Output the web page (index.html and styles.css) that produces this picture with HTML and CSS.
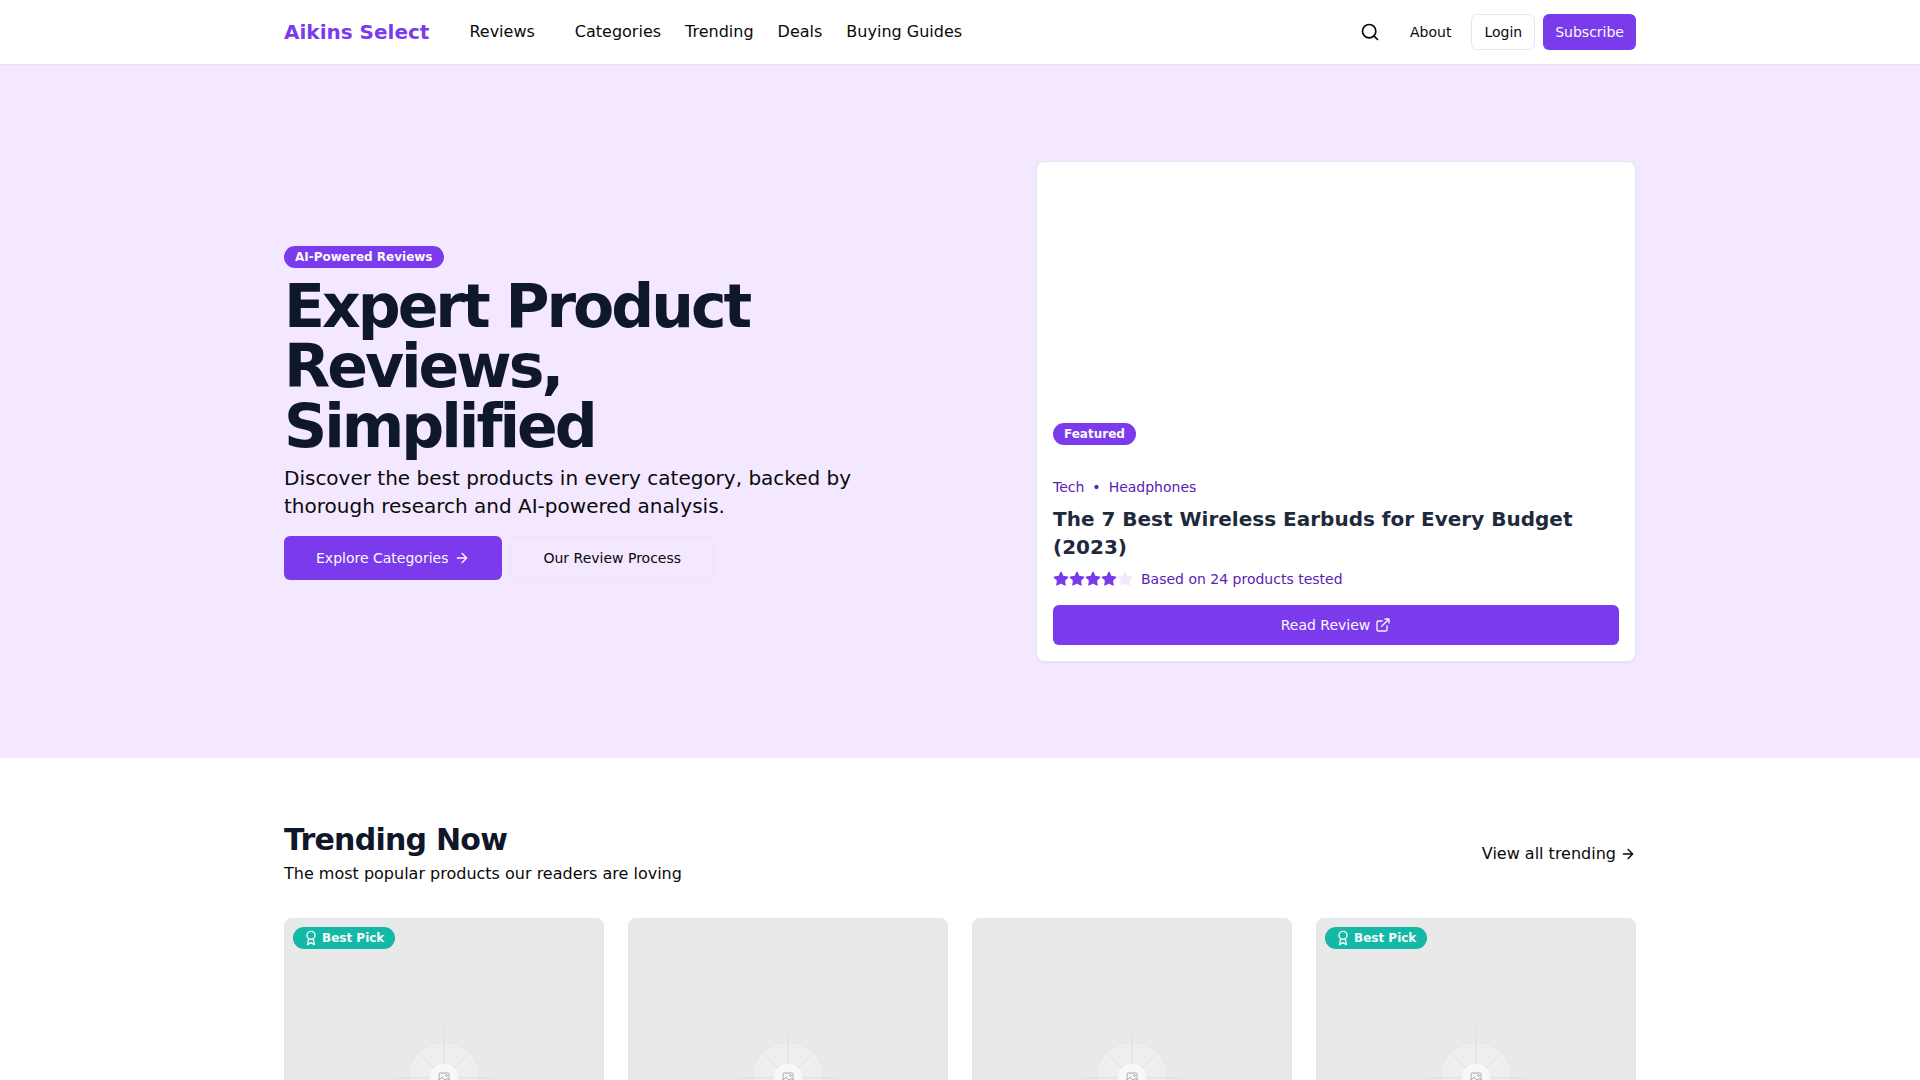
FILE: index.html
```html
<!DOCTYPE html>
<html lang="en">
<head>
  <meta charset="UTF-8">
  <title>Aikins Select</title>
  <meta name="viewport" content="width=device-width, initial-scale=1.0">
  <link rel="stylesheet" href="styles.css">
</head>
<body>
  <svg class="icon-defs" width="0" height="0" aria-hidden="true">
    <defs>
      <radialGradient id="ray-fade" gradientUnits="userSpaceOnUse" cx="60" cy="60" r="60">
        <stop offset="0.3" stop-color="#dddddd"/>
        <stop offset="0.7" stop-color="#dedede"/>
        <stop offset="1" stop-color="#e6e6e6"/>
      </radialGradient>
      <symbol id="arrow-right" viewBox="0 0 24 24"><path d="M5 12h14M12 5l7 7-7 7"/></symbol>
      <symbol id="star" viewBox="0 0 24 24"><path d="M12 2l3.09 6.26L22 9.27l-5 4.87 1.18 6.88L12 17.77l-6.18 3.25L7 14.14 2 9.27l6.91-1.01L12 2z"/></symbol>
      <symbol id="award" viewBox="0 0 24 24"><circle cx="12" cy="8" r="6"/><path d="M15.48 12.89L17 22l-5-3-5 3 1.52-9.11"/></symbol>
      <symbol id="placeholder" viewBox="0 0 120 120">
        <circle class="ph-outer" cx="60" cy="60" r="36"/>
        <path class="ph-rays" d="M60 10v35M60 75v35M10 60h35M75 60h35M13 13l36 36M107 13L71 49M13 107l36-36M107 107L71 71"/>
        <circle class="ph-inner" cx="60" cy="60" r="15"/>
        <g class="ph-glyph">
          <rect x="55" y="55" width="10" height="10" rx="1"/>
          <path d="M55 62l3-3 3 3 2-1.500 2 1.500"/>
          <circle cx="62.500" cy="57.500" r=".8"/>
        </g>
      </symbol>
    </defs>
  </svg>

  <header class="site-header">
    <div class="container header-row">
      <div class="header-left">
        <a class="logo" href="#">Aikins Select</a>
        <nav class="main-nav">
          <a class="nav-link nav-link-dropdown" href="#">Reviews</a>
          <a class="nav-link" href="#">Categories</a>
          <a class="nav-link" href="#">Trending</a>
          <a class="nav-link" href="#">Deals</a>
          <a class="nav-link" href="#">Buying Guides</a>
        </nav>
      </div>
      <div class="header-right">
        <button class="search-btn" aria-label="Search">
          <svg class="icon-search" viewBox="0 0 24 24"><circle cx="11" cy="11" r="8"/><path d="M21 21l-4.300-4.300"/></svg>
        </button>
        <a class="about-link" href="#">About</a>
        <a class="btn btn-outline btn-small" href="#">Login</a>
        <a class="btn btn-primary btn-small" href="#">Subscribe</a>
      </div>
    </div>
  </header>

  <main>
    <section class="hero">
      <div class="container hero-grid">
        <div class="hero-text">
          <span class="badge">AI-Powered Reviews</span>
          <h1 class="hero-title">Expert Product Reviews, Simplified</h1>
          <p class="hero-lead">Discover the best products in every category, backed by thorough research and AI-powered analysis.</p>
          <div class="hero-actions">
            <a class="btn btn-primary btn-large" href="#">Explore Categories
              <svg class="icon-line icon-16"><use href="#arrow-right"/></svg>
            </a>
            <a class="btn btn-ghost btn-large" href="#">Our Review Process</a>
          </div>
        </div>

        <article class="featured-card">
          <div class="featured-image"></div>
          <div class="featured-body">
            <span class="badge">Featured</span>
            <div class="featured-meta">
              <span>Tech</span>
              <span class="meta-dot">•</span>
              <span>Headphones</span>
            </div>
            <h3 class="featured-title">The 7 Best Wireless Earbuds for Every Budget (2023)</h3>
            <div class="featured-rating">
              <div class="stars">
                <svg class="star"><use href="#star"/></svg>
                <svg class="star"><use href="#star"/></svg>
                <svg class="star"><use href="#star"/></svg>
                <svg class="star"><use href="#star"/></svg>
                <svg class="star star-empty"><use href="#star"/></svg>
              </div>
              <span>Based on 24 products tested</span>
            </div>
            <a class="btn btn-primary btn-block" href="#">Read Review
              <svg class="icon-line icon-16" viewBox="0 0 24 24"><path d="M18 13v6a2 2 0 0 1-2 2H5a2 2 0 0 1-2-2V8a2 2 0 0 1 2-2h6M15 3h6v6M10 14L21 3"/></svg>
            </a>
          </div>
        </article>
      </div>
    </section>

    <section class="trending">
      <div class="container">
        <div class="section-head">
          <div>
            <h2 class="section-title">Trending Now</h2>
            <p class="section-sub">The most popular products our readers are loving</p>
          </div>
          <a class="view-all" href="#">View all trending
            <svg class="icon-line icon-16"><use href="#arrow-right"/></svg>
          </a>
        </div>
        <div class="product-grid">
          <div class="product-card">
            <span class="pick-badge"><svg class="icon-line icon-16"><use href="#award"/></svg>Best Pick</span>
            <svg class="placeholder"><use href="#placeholder"/></svg>
          </div>
          <div class="product-card">
            <svg class="placeholder"><use href="#placeholder"/></svg>
          </div>
          <div class="product-card">
            <svg class="placeholder"><use href="#placeholder"/></svg>
          </div>
          <div class="product-card">
            <span class="pick-badge"><svg class="icon-line icon-16"><use href="#award"/></svg>Best Pick</span>
            <svg class="placeholder"><use href="#placeholder"/></svg>
          </div>
        </div>
      </div>
    </section>
  </main>
</body>
</html>
```

FILE: styles.css
```css
* {
  box-sizing: border-box;
}
html, body {
  margin: 0;
  font-family: "DejaVu Sans", sans-serif;
  background: #fff;
  color: #0a0a0a;
}
a {
  color: inherit;
  text-decoration: none;
}
.icon-defs {
  position: absolute;
}
.container {
  width: 1352px;
  margin: 0 auto;
}

/* Icons */
.icon-line {
  fill: none;
  stroke: currentColor;
  stroke-width: 2;
  stroke-linecap: round;
  stroke-linejoin: round;
  flex-shrink: 0;
}
.icon-16 {
  width: 16px;
  height: 16px;
}

/* Header */
.site-header {
  height: 65px;
  border-bottom: 1px solid #e2e8f0;
  background: #fff;
}
.header-row {
  height: 64px;
  display: flex;
  align-items: center;
  justify-content: space-between;
}
.header-left {
  display: flex;
  align-items: center;
  gap: 40px;
}
.logo {
  font-size: 20px;
  font-weight: 700;
  color: #7c3aed;
}
.main-nav {
  display: flex;
  align-items: center;
  gap: 24px;
  font-size: 16px;
  line-height: 24px;
}
.nav-link-dropdown {
  margin-right: 16px;
}
.header-right {
  display: flex;
  align-items: center;
  gap: 8px;
  font-size: 14px;
}
.search-btn {
  width: 40px;
  height: 40px;
  padding: 0;
  border: 0;
  background: none;
  color: #0a0a0a;
  display: flex;
  align-items: center;
  justify-content: center;
}
.icon-search {
  width: 20px;
  height: 20px;
  fill: none;
  stroke: currentColor;
  stroke-width: 2;
  stroke-linecap: round;
  stroke-linejoin: round;
}
.about-link {
  padding: 0 12px;
}

/* Buttons */
.btn {
  display: inline-flex;
  align-items: center;
  justify-content: center;
  gap: 6px;
  border-radius: 6px;
  font-size: 14px;
  border: 1px solid transparent;
}
.btn-primary {
  background: #7c3aed;
  color: #f8fafc;
  border: 0;
}
.btn-outline {
  background: #fff;
  border-color: #e2e8f0;
}
.btn-ghost {
  border-color: #e9e5fb;
}
.btn-small {
  height: 36px;
  padding: 0 12px;
}
.btn-large {
  height: 44px;
  padding: 0 32px;
}
.btn-block {
  width: 100%;
  height: 40px;
  gap: 5px;
}

/* Hero */
.hero {
  background: #f3e8ff;
  padding: 96px 0;
}
.hero-grid {
  display: grid;
  grid-template-columns: 1fr 600px;
  align-items: center;
}
.hero-text {
  width: 576px;
  padding-top: 2px;
  display: flex;
  flex-direction: column;
  align-items: flex-start;
}
.badge {
  display: inline-block;
  padding: 2px 10px;
  border: 1px solid transparent;
  border-radius: 999px;
  background: #7c3aed;
  color: #f8fafc;
  font-size: 12px;
  font-weight: 700;
  line-height: 16px;
}
.hero-title {
  margin: 8px 0 0;
  font-size: 60px;
  line-height: 60px;
  font-weight: 700;
  letter-spacing: -3px;
  color: #0f172a;
}
.hero-lead {
  margin: 8px 0 0;
  font-size: 20px;
  line-height: 28px;
}
.hero-actions {
  margin-top: 16px;
  display: flex;
  gap: 8px;
}

/* Featured card */
.featured-card {
  height: 501px;
  background: #fff;
  border: 1px solid #e2e8f0;
  border-radius: 8px;
  box-shadow: 0 1px 2px rgba(0, 0, 0, 0.05);
  display: flex;
  flex-direction: column;
}
.featured-image {
  flex: 1;
}
.featured-body {
  padding: 0 16px 16px;
}
.featured-meta {
  margin-top: 32px;
  display: flex;
  gap: 8px;
  font-size: 14px;
  line-height: 20px;
  color: #5b21b6;
}
.featured-title {
  margin: 8px 0 0;
  font-size: 20px;
  line-height: 28px;
  font-weight: 700;
  color: #1e293b;
}
.featured-rating {
  margin-top: 8px;
  display: flex;
  align-items: center;
  gap: 8px;
  font-size: 14px;
  line-height: 20px;
  color: #5b21b6;
}
.stars {
  display: flex;
}
.star {
  width: 16px;
  height: 16px;
  fill: #7c3aed;
  stroke: #7c3aed;
  stroke-width: 2;
  stroke-linejoin: round;
}
.star-empty {
  fill: #f3e8ff;
  stroke: #f3e8ff;
}
.featured-rating + .btn {
  margin-top: 16px;
}

/* Trending */
.trending {
  padding-top: 64px;
}
.section-head {
  display: flex;
  align-items: center;
  justify-content: space-between;
  margin-bottom: 32px;
}
.section-title {
  margin: 0;
  font-size: 30px;
  line-height: 36px;
  font-weight: 700;
  letter-spacing: -0.75px;
  color: #0f172a;
}
.section-sub {
  margin: 4px 0 0;
  font-size: 16px;
  line-height: 24px;
}
.view-all {
  display: inline-flex;
  align-items: center;
  gap: 4px;
  font-size: 16px;
  line-height: 24px;
}
.product-grid {
  display: grid;
  grid-template-columns: repeat(4, 1fr);
  gap: 24px;
}
.product-card {
  position: relative;
  height: 320px;
  background: #e9e9e9;
  border: 1px solid #e2e8f0;
  border-radius: 8px;
  display: flex;
  align-items: center;
  justify-content: center;
}
.pick-badge {
  position: absolute;
  top: 8px;
  left: 8px;
  display: inline-flex;
  align-items: center;
  gap: 3px;
  padding: 2px 11px 2px 10px;
  border-radius: 999px;
  background: #14b8a6;
  color: #f8fafc;
  font-size: 12px;
  font-weight: 700;
  line-height: 18px;
}
.placeholder {
  width: 120px;
  height: 120px;
}
.ph-rays {
  fill: none;
  stroke: url(#ray-fade);
  stroke-width: 1;
}
.ph-outer {
  fill: #eeeeee;
  stroke: #e6e6e6;
}
.ph-inner {
  fill: #f7f7f7;
  stroke: #ededed;
}
.ph-glyph {
  fill: none;
  stroke: #a8a8a8;
  stroke-width: 1;
}
```
